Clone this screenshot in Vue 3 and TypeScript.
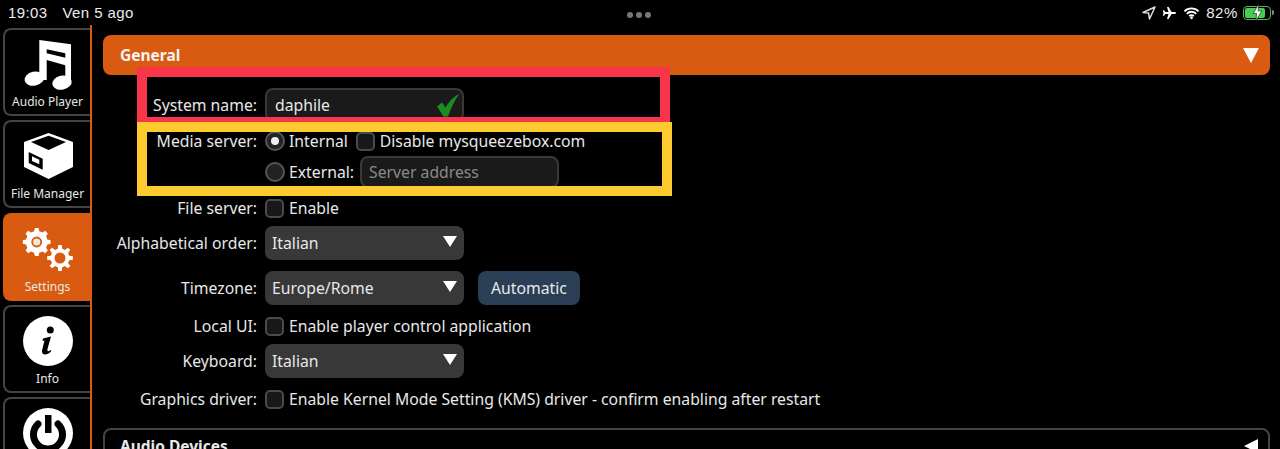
<script setup lang="ts">
const navItems = [
  { id: 'audio', label: 'Audio Player', active: false },
  { id: 'file', label: 'File Manager', active: false },
  { id: 'settings', label: 'Settings', active: true },
  { id: 'info', label: 'Info', active: false },
  { id: 'power', label: '', active: false },
]

function gear(cx: number, cy: number, outer: number, root: number, teeth: number): string {
  const pts: string[] = []
  const step = (Math.PI * 2) / teeth
  for (let i = 0; i < teeth; i++) {
    const a = i * step - Math.PI / 2
    const corners: [number, number][] = [
      [root, a - step * 0.3],
      [outer, a - step * 0.17],
      [outer, a + step * 0.17],
      [root, a + step * 0.3],
    ]
    for (const [r, t] of corners) {
      pts.push(`${(cx + r * Math.cos(t)).toFixed(2)} ${(cy + r * Math.sin(t)).toFixed(2)}`)
    }
  }
  return `M${pts.join('L')}Z`
}
const bigGear = gear(18.7, 19, 14, 11, 8)
const smallGear = gear(42, 35, 13, 9.5, 8)
</script>

<template>
  <div class="page">
    <header class="status">
      <div class="status-left"><span>19:03</span><span>Ven 5 ago</span></div>
      <div class="dots"><i></i><i></i><i></i></div>
      <div class="status-right">
        <svg width="14" height="14" viewBox="0 0 14 14"><path d="M13 1 1 6.500l5.600.6.9 5.900z" fill="none" stroke="#ddd" stroke-width="1.500" stroke-linejoin="round"/></svg>
        <svg width="15" height="14" viewBox="0 0 15 14"><path d="M5 1h1.600l3 4.900h3.200c1.500 0 1.500 2.200 0 2.200H9.600l-3 4.900H5l1.500-4.900H3.300L2 9.700H.8L1.500 7 .8 4.300H2l1.300 1.600h3.200z" fill="#fff"/></svg>
        <svg width="17" height="14" viewBox="0 0 18 14"><path d="M1.500 5.200a10.500 10.500 0 0 1 15 0M4 7.800a7 7 0 0 1 10 0M6.500 10.200a3.500 3.500 0 0 1 5 0" fill="none" stroke="#fff" stroke-width="1.900"/><circle cx="9" cy="12" r="1.500" fill="#fff"/></svg>
        <span class="pct">82%</span>
        <span class="battery"><span class="level"></span><svg class="bolt" width="11" height="17" viewBox="0 0 10 15"><path d="M6 0 1 8.500h3.200L3.500 15 9 6H5.500z" fill="#fff" stroke="#0a2a0a" stroke-width=".6"/></svg></span>
        <span class="nub"></span>
      </div>
    </header>

    <div class="body">
      <nav class="sidebar">
        <div v-for="item in navItems" :key="item.id" class="nav" :class="{ active: item.active }">
          <svg class="nav-icon" width="60" height="56" viewBox="0 0 60 56">
            <g v-if="item.id === 'audio'" fill="#fff">
              <path fill-rule="evenodd" d="M21.300 2 53 6.300V46H47.300V27.300L28.700 22V42H21.300ZM28.700 11.300 47.300 15.300V19.700L28.700 15.300Z"/>
              <ellipse cx="16.300" cy="40.700" rx="9.800" ry="7" transform="rotate(-12 16.300 40.700)"/>
              <ellipse cx="44" cy="44.700" rx="9.800" ry="7" transform="rotate(-12 44 44.700)"/>
            </g>
            <g v-else-if="item.id === 'file'">
              <path fill="#fff" fill-rule="evenodd" d="M30.600 3 55 12V37L30.600 49 6 37V12ZM30.600 5.800 13 12 30.600 20 48 12Z"/>
              <path d="M10.700 22 24.700 28.700V39.700L10.700 33Z" fill="#000"/>
              <path d="M14 26.300 21.300 29.700V34.300L14 31Z" fill="#fff"/>
            </g>
            <g v-else-if="item.id === 'settings'">
              <path :d="bigGear" fill="#fff"/>
              <circle cx="18.700" cy="19" r="4.500" fill="#f4e6da" stroke="#d85b11" stroke-width="1.800"/>
              <path :d="smallGear" fill="#fff"/>
              <circle cx="42" cy="35" r="5.500" fill="#d85b11"/>
            </g>
            <g v-else-if="item.id === 'info'">
              <circle cx="30" cy="26" r="25" fill="#fff"/>
              <circle cx="32.300" cy="15" r="3.500" fill="#000"/>
              <path d="M25 23.500 33 21.500 29.500 34c-.6 2.500.8 3 3 1l.8 1c-3 4-10 5.500-9.300-.5l2.500-10-2 .4z" fill="#000"/>
            </g>
            <g v-else>
              <circle cx="30" cy="26" r="25" fill="#fff"/>
              <path d="M20 17A14.500 14.500 0 1 0 40 17" fill="none" stroke="#000" stroke-width="7" stroke-linecap="round"/>
              <rect x="27" y="8" width="6.500" height="18" fill="#000"/>
            </g>
          </svg>
          <span v-if="item.label" class="nav-label">{{ item.label }}</span>
        </div>
      </nav>

      <main class="content">
        <div class="panel-head">
          <strong>General</strong>
          <span class="tri down"></span>
        </div>

        <div class="form">
          <div class="row r-name">
            <label>System name:</label>
            <div class="ctl">
              <div class="input name">
                <span>daphile</span>
                <svg width="24" height="26" viewBox="0 0 24 24"><path d="M1 13.500 6 9.500l3.500 5C12.500 9 17 4 23.500 .5 19 7 15 14.500 12 23.500H7.500z" fill="#1b8c20"/></svg>
              </div>
            </div>
          </div>
          <div class="row r-media">
            <label>Media server:</label>
            <div class="ctl">
              <span class="radio on"></span><span class="txt">Internal</span>
              <span class="check tight"></span><span class="txt">Disable mysqueezebox.com</span>
            </div>
          </div>
          <div class="row r-ext">
            <label></label>
            <div class="ctl">
              <span class="radio"></span><span class="txt">External:</span>
              <div class="input addr"><span class="ph">Server address</span></div>
            </div>
          </div>
          <div class="row r-file">
            <label>File server:</label>
            <div class="ctl"><span class="check"></span><span class="txt">Enable</span></div>
          </div>
          <div class="row r-alpha">
            <label>Alphabetical order:</label>
            <div class="ctl"><div class="select"><span>Italian</span><span class="tri small"></span></div></div>
          </div>
          <div class="row r-tz">
            <label>Timezone:</label>
            <div class="ctl">
              <div class="select"><span>Europe/Rome</span><span class="tri small"></span></div>
              <div class="btn">Automatic</div>
            </div>
          </div>
          <div class="row r-local">
            <label>Local UI:</label>
            <div class="ctl"><span class="check"></span><span class="txt">Enable player control application</span></div>
          </div>
          <div class="row r-kb">
            <label>Keyboard:</label>
            <div class="ctl"><div class="select"><span>Italian</span><span class="tri small"></span></div></div>
          </div>
          <div class="row r-gfx">
            <label>Graphics driver:</label>
            <div class="ctl"><span class="check"></span><span class="txt">Enable Kernel Mode Setting (KMS) driver - confirm enabling after restart</span></div>
          </div>
        </div>

        <div class="panel-closed">
          <strong>Audio Devices</strong>
          <span class="tri left"></span>
        </div>

        <div class="mark red"></div>
        <div class="mark yellow"></div>
      </main>
    </div>
  </div>
</template>

<style>
html, body { margin: 0; background: #000; }
</style>

<style scoped>
.page {
  width: 1280px;
  height: 449px;
  overflow: hidden;
  background: #000;
  color: #e8e8e8;
  font-family: "Noto Sans", "Open Sans", sans-serif;
  font-size: 15.75px;
  display: flex;
  flex-direction: column;
  position: relative;
}
.status {
  height: 25px;
  flex: none;
  display: flex;
  align-items: center;
  justify-content: space-between;
  padding: 0 9px 0 8px;
  position: relative;
  font-family: "Liberation Sans", sans-serif;
  font-size: 15px;
  color: #ececec;
}
.status-left { display: flex; gap: 15px; letter-spacing: .4px; }
.dots { position: absolute; left: 627px; top: 12px; display: flex; gap: 3px; }
.dots i { width: 6px; height: 6px; border-radius: 50%; background: #777; }
.status-right { display: flex; align-items: center; gap: 6px; }
.pct { font-size: 15px; letter-spacing: .6px; }
.battery {
  width: 28px; height: 14px; border: 1px solid #5fae64; border-radius: 4px;
  position: relative; display: block; padding: 1px; box-sizing: border-box; margin-left: -1px;
}
.level { display: block; height: 100%; width: 82%; background: #47cf52; border-radius: 2px; }
.bolt { position: absolute; left: 8px; top: -3px; }
.nub { width: 2px; height: 5px; background: #888; margin-left: -5px; margin-right: -3px; border-radius: 0 2px 2px 0; }

.body { flex: 1; display: flex; min-height: 0; }
.sidebar {
  width: 87px;
  flex: none;
  padding: 3px 0 0 3px;
  border-right: 2px solid #d85b11;
  display: flex;
  flex-direction: column;
  gap: 4.250px;
  overflow: hidden;
}
.nav {
  height: 84px;
  flex: none;
  border: 2px solid #444;
  border-right: 0;
  border-radius: 8px 0 0 8px;
  display: flex;
  flex-direction: column;
  align-items: center;
}
.nav.active { background: #d85b11; border-color: #d85b11; }
.nav-icon { margin-top: 8px; flex: none; }
.nav-label { font-size: 12px; line-height: 14px; margin-top: 1px; color: #e8e8e8; white-space: nowrap; }

.content { flex: 1; min-width: 0; position: relative; padding: 10px 10px 0 11px; }
.panel-head {
  height: 40px;
  background: #d85b11;
  border-radius: 8px;
  display: flex;
  align-items: center;
  justify-content: space-between;
  padding: 0 11px 0 17px;
  color: #f4f4f4;
}
strong { font-weight: 700; font-size: 15.500px; }
.tri { display: block; width: 0; height: 0; }
.tri.down { border-left: 8px solid transparent; border-right: 8px solid transparent; border-top: 15px solid #fff; }
.tri.small { border-left: 7px solid transparent; border-right: 7px solid transparent; border-top: 11px solid #fff; margin-bottom: 3px; }
.tri.left { border-top: 7px solid transparent; border-bottom: 7px solid transparent; border-right: 14px solid #fff; }

.form { display: flex; flex-direction: column; }
.row { display: flex; align-items: center; }
.row label { width: 154px; text-align: right; flex: none; margin-right: 8px; white-space: nowrap; }
.ctl { display: flex; align-items: center; }
.r-name { margin-top: 13px; height: 34px; }
.r-media { margin-top: 7px; height: 24px; }
.r-ext { margin-top: 3px; height: 32px; }
.r-file { margin-top: 8px; height: 24px; }
.r-alpha { margin-top: 5px; height: 35px; }
.r-tz { margin-top: 11px; height: 34px; }
.r-local { margin-top: 9px; height: 24px; }
.r-kb { margin-top: 5px; height: 35px; }
.r-gfx { margin-top: 9px; height: 24px; }
.txt { white-space: nowrap; }
.input {
  box-sizing: border-box;
  background: #1a1a1a;
  border: 2px solid #383838;
  border-radius: 8px;
  display: flex;
  align-items: center;
}
.input.name { width: 199px; height: 34px; padding: 0 0 0 8px; justify-content: space-between; }
.input.name svg { margin-right: 2px; }
.input.addr { width: 199px; height: 32px; padding-left: 7px; margin-left: 6px; }
.ph { color: #8a8a8a; }
.radio {
  width: 16px; height: 16px; border: 2px solid #555; border-radius: 50%; background: #222;
  margin-right: 4px; position: relative; flex: none;
}
.radio.on::after {
  content: ""; position: absolute; left: 4px; top: 4px; width: 8px; height: 8px; border-radius: 50%; background: #eee;
}
.check {
  width: 15px; height: 15px; border: 2px solid #4a4a4a; border-radius: 5px; background: #181818;
  margin-right: 5px; flex: none;
}
.check.tight { margin-left: 8px; }
.select {
  width: 199px; height: 100%; min-height: 34px; box-sizing: border-box;
  background: #383838; border-radius: 8px;
  display: flex; align-items: center; justify-content: space-between;
  padding: 0 7px;
  align-self: stretch;
}
.btn {
  margin-left: 14px; height: 34px; width: 102px; background: #2a3f55; border-radius: 8px;
  display: flex; align-items: center; justify-content: center;
}
.panel-closed {
  margin-top: 17px;
  height: 40px;
  box-sizing: border-box;
  border: 2px solid #444;
  border-radius: 8px;
  display: flex;
  justify-content: space-between;
  padding: 5px 10px 0 15px;
}
.panel-closed .tri { margin-top: 4px; }
.mark { position: absolute; box-sizing: border-box; pointer-events: none; }
.mark.red { left: 45px; top: 42px; width: 533px; height: 60px; border: 10px solid #f9354b; }
.mark.yellow { left: 45px; top: 97px; width: 535px; height: 74px; border: 10px solid #fdcb30; }
</style>
